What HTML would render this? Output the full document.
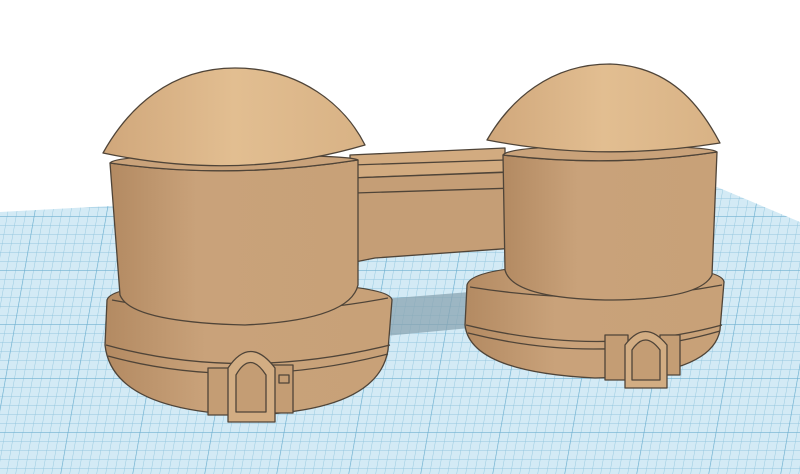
<!DOCTYPE html>
<html><head><meta charset="utf-8"><style>
html,body{margin:0;padding:0;background:#fff;}
svg{display:block}
</style></head><body>
<svg width="800" height="474" viewBox="0 0 800 474" xmlns="http://www.w3.org/2000/svg">
<defs>
<pattern id="g" width="9" height="9" patternUnits="userSpaceOnUse" patternTransform="skewX(-10)">
<rect width="9" height="9" fill="#d3eaf5"/>
<path d="M0 0H9M0 0V9" stroke="#92c6de" stroke-width="0.9"/>
</pattern>
<pattern id="G" width="72" height="54" patternUnits="userSpaceOnUse" patternTransform="skewX(-10)">
<path d="M0 0H72M0 0V54" stroke="#6fb0d0" stroke-width="1.2"/>
</pattern>
<linearGradient id="dome" x1="0" x2="1"><stop offset="0" stop-color="#d0a77b"/><stop offset=".5" stop-color="#e2be91"/><stop offset="1" stop-color="#d8b285"/></linearGradient>
<linearGradient id="cyl" x1="0" x2="1"><stop offset="0" stop-color="#b38a62"/><stop offset=".35" stop-color="#c9a27a"/><stop offset="1" stop-color="#c8a178"/></linearGradient>
</defs>
<polygon points="0,212 110,206 400,198 717,187 800,222 800,474 0,474" fill="url(#g)"/>
<polygon points="0,212 110,206 400,198 717,187 800,222 800,474 0,474" fill="url(#G)"/>
<path d="M370 300 L470 292 L470 328 L385 336 Z" fill="#8aa4b2" opacity=".75"/>
<g stroke="#4f4438" stroke-width="1.3" stroke-linejoin="round">
<!-- bridge -->
<path d="M350 155 L505 148 L505 172 L350 178 Z" fill="#d2ab80"/>
<path d="M352 165 L505 160" fill="none"/>
<path d="M350 178 L515 172 L515 248 L375 258 L355 262 Z" fill="#c59e76"/>
<path d="M355 193 L515 188" fill="none"/>
<!-- left base -->
<path d="M107 300 Q112 282 250 282 Q390 284 392 300 L388 350 Q378 412 245 415 Q112 410 105 345 Z" fill="url(#cyl)"/>
<path d="M112 300 Q245 325 388 298" fill="none"/>
<path d="M106 345 Q240 382 390 345" fill="none"/>
<path d="M108 356 Q240 392 388 354" fill="none"/>
<!-- left drum -->
<path d="M110 163 Q230 180 358 160 L358 285 Q350 320 245 325 Q130 322 120 295 Z" fill="url(#cyl)"/>
<path d="M110 163 Q115 155 230 155 Q350 155 358 160 Q230 180 110 163 Z" fill="#c9a27a"/>
<!-- left dome -->
<path d="M103 153 C128 108,170 68,235 68 C300 68,345 105,365 145 Q240 182 103 153 Z" fill="url(#dome)"/>
<!-- left door -->
<path d="M208 368 L232 368 L232 415 L208 415 Z M268 365 L293 365 L293 413 L268 413 Z" fill="#c49d74"/>
<path d="M228 422 L228 368 Q250 335 275 368 L275 422 Z" fill="#d2ad83"/>
<path d="M236 412 L236 375 Q250 350 266 375 L266 412 Z" fill="#c49d74"/>
<rect x="279" y="375" width="10" height="8" fill="#c49d74"/>
<!-- right base -->
<path d="M467 285 Q472 265 595 265 Q722 265 724 282 L720 330 Q712 375 595 378 Q470 372 465 325 Z" fill="url(#cyl)"/>
<path d="M470 287 Q600 308 722 285" fill="none"/>
<path d="M466 325 Q600 358 722 325" fill="none"/>
<path d="M468 333 Q600 366 720 331" fill="none"/>
<!-- right drum -->
<path d="M503 155 Q610 168 717 152 L712 275 Q700 300 605 300 Q512 298 505 270 Z" fill="url(#cyl)"/>
<path d="M503 155 Q510 146 610 146 Q712 146 717 152 Q610 168 503 155 Z" fill="#c9a27a"/>
<!-- right dome -->
<path d="M487 140 C510 100,550 64,610 64 C670 66,700 105,720 143 Q600 162 487 140 Z" fill="url(#dome)"/>
<!-- right door -->
<path d="M605 335 L628 335 L628 380 L605 380 Z M660 335 L680 335 L680 375 L660 375 Z" fill="#c49d74"/>
<path d="M625 388 L625 345 Q645 318 667 345 L667 388 Z" fill="#d2ad83"/>
<path d="M632 380 L632 350 Q645 330 660 350 L660 380 Z" fill="#c49d74"/>
</g>
</svg>
</body></html>
